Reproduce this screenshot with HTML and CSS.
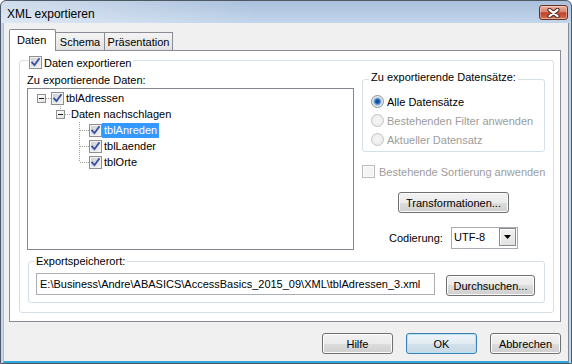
FILE: index.html
```html
<!DOCTYPE html>
<html lang="de">
<head>
<meta charset="utf-8">
<title>XML exportieren</title>
<link rel="stylesheet" href="styles.css">
</head>
<body>
<div class="window">
  <div class="titlebar">
    <span class="title">XML exportieren</span>
    <span class="close">
      <svg width="13" height="10" viewBox="0 0 13 10">
        <path d="M2.5 1.8 L10.5 8.2 M10.5 1.8 L2.5 8.2" stroke="#4b2922" stroke-width="4.2" stroke-linecap="round"/>
        <path d="M2.5 1.8 L10.5 8.2 M10.5 1.8 L2.5 8.2" stroke="#ffffff" stroke-width="2.2" stroke-linecap="round"/>
      </svg>
    </span>
  </div>
  <div class="client">
    <div class="tabs">
      <div class="tab tab-active">Daten</div>
      <div class="tab tab-idle tab-schema">Schema</div>
      <div class="tab tab-idle tab-pres">Präsentation</div>
    </div>
    <div class="panel">
      <div class="group g-main">
        <div class="legend lg-main">
          <span class="chk"><svg width="11" height="11" viewBox="0 0 11 11"><path d="M1.5 4.8 L4.5 8 L9.5 1.2" stroke="#3a4f9e" stroke-width="1.8" fill="none"/></svg></span>
          <span>Daten exportieren</span>
        </div>
        <div class="main-row">
          <div class="left-col">
            <div class="lbl-tree">Zu exportierende Daten:</div>
            <div class="tree">
              <div class="row">
                <span class="cell c-h"><span class="exp"><span class="minus"></span></span></span>
                <span class="chk"><svg width="11" height="11" viewBox="0 0 11 11"><path d="M1.5 4.8 L4.5 8 L9.5 1.2" stroke="#3a4f9e" stroke-width="1.8" fill="none"/></svg></span>
                <span class="txt">tblAdressen</span>
              </div>
              <div class="row">
                <span class="cell"></span>
                <span class="cell c-h c-top"><span class="exp"><span class="minus"></span></span></span>
                <span class="txt txt-plain">Daten nachschlagen</span>
              </div>
              <div class="row">
                <span class="cell"></span>
                <span class="cell"></span>
                <span class="cell c-h c-full"></span>
                <span class="chk"><svg width="11" height="11" viewBox="0 0 11 11"><path d="M1.5 4.8 L4.5 8 L9.5 1.2" stroke="#3a4f9e" stroke-width="1.8" fill="none"/></svg></span>
                <span class="txt txt-sel">tblAnreden</span>
              </div>
              <div class="row">
                <span class="cell"></span>
                <span class="cell"></span>
                <span class="cell c-h c-full"></span>
                <span class="chk"><svg width="11" height="11" viewBox="0 0 11 11"><path d="M1.5 4.8 L4.5 8 L9.5 1.2" stroke="#3a4f9e" stroke-width="1.8" fill="none"/></svg></span>
                <span class="txt">tblLaender</span>
              </div>
              <div class="row">
                <span class="cell"></span>
                <span class="cell"></span>
                <span class="cell c-h c-top"></span>
                <span class="chk"><svg width="11" height="11" viewBox="0 0 11 11"><path d="M1.5 4.8 L4.5 8 L9.5 1.2" stroke="#3a4f9e" stroke-width="1.8" fill="none"/></svg></span>
                <span class="txt">tblOrte</span>
              </div>
            </div>
          </div>
          <div class="right-col">
            <div class="group g-records">
              <div class="legend lg-records">Zu exportierende Datensätze:</div>
              <div class="opt opt-first"><span class="radio radio-on"></span><span>Alle Datensätze</span></div>
              <div class="opt disabled"><span class="radio radio-dis"></span><span>Bestehenden Filter anwenden</span></div>
              <div class="opt disabled"><span class="radio radio-dis"></span><span>Aktueller Datensatz</span></div>
            </div>
            <div class="opt-chk disabled"><span class="chk chk-dis"></span><span>Bestehende Sortierung anwenden</span></div>
            <div class="btn btn-trans">Transformationen...</div>
            <div class="enc-row">
              <span class="enc-lbl">Codierung:</span>
              <div class="select">
                <span class="sel-val">UTF-8</span>
                <span class="sel-arrow"><svg width="7" height="4" viewBox="0 0 7 4"><path d="M0 0 H7 L3.5 4 Z" fill="#000"/></svg></span>
              </div>
            </div>
          </div>
        </div>
        <div class="group g-export">
          <div class="legend lg-export">Exportspeicherort:</div>
          <div class="export-row">
            <div class="input">E:\Business\Andre\ABASICS\AccessBasics_2015_09\XML\tblAdressen_3.xml</div>
            <div class="btn btn-browse">Durchsuchen...</div>
          </div>
        </div>
      </div>
    </div>
    <div class="footer">
      <div class="btn btn-foot">Hilfe</div>
      <div class="btn btn-foot btn-default">OK</div>
      <div class="btn btn-foot">Abbrechen</div>
    </div>
  </div>
</div>
</body>
</html>
```
FILE: styles.css
```css
* { box-sizing: border-box; }
html, body { margin: 0; padding: 0; }
body {
  width: 572px;
  height: 364px;
  overflow: hidden;
  font-family: "Liberation Sans", Arial, sans-serif;
  font-size: 11px;
  line-height: 14px;
  color: #000;
  background: #ffffff;
}

.window {
  width: 572px;
  height: 364px;
  border: 1px solid #4e5966;
  border-radius: 6px 6px 0 0;
  padding: 0 2px;
  display: flex;
  flex-direction: column;
  background:
    linear-gradient(to right, rgba(255,255,255,0.45), rgba(255,255,255,0) 45%) 0 0 / 100% 22px no-repeat,
    linear-gradient(#aac0dc, #c2d5eb 22px, #c4d7ed);
}

.titlebar {
  height: 22px;
  flex: none;
  display: flex;
  align-items: flex-start;
  padding-left: 4px;
}
.title {
  font-size: 12px;
  line-height: 16px;
  margin-top: 5px;
}
.close {
  width: 29px;
  height: 15px;
  margin: 4px 1px 0 auto;
  border: 1px solid #6a2f26;
  border-radius: 3px;
  background: linear-gradient(#eab0a2, #d9846f 45%, #c2432b 52%, #cd5b3e 85%, #de8a6c);
  box-shadow: inset 0 0 0 1px rgba(255,255,255,0.35);
  display: flex;
  align-items: center;
  justify-content: center;
}

.client {
  flex: 1;
  background: #f0f0f0;
  border-left: 1px solid #8cc9ec;
  border-right: 1px solid #7d8a99;
  border-bottom: 2px solid #2ea6dd;
  display: flex;
  flex-direction: column;
}

/* Tabs */
.tabs {
  display: flex;
  align-items: flex-end;
  padding: 6px 0 0 5px;
  margin-bottom: -1px;
  position: relative;
  z-index: 1;
}
.tab {
  border: 1px solid #898c95;
  border-bottom: none;
  white-space: nowrap;
}
.tab-active {
  width: 47px;
  height: 22px;
  background: #ffffff;
  padding: 3px 0 0 7px;
  border-radius: 2px 2px 0 0;
}
.tab-idle {
  height: 18px;
  margin-bottom: 1px;
  background: linear-gradient(#f4f4f4, #e2e2e2);
  text-align: center;
  padding-top: 2px;
}
.tab-schema { width: 49px; border-left: none; }
.tab-pres { width: 68px; border-left: none; }

.panel {
  flex: none;
  width: 552px;
  height: 272px;
  margin-left: 5px;
  border: 1px solid #898c95;
  background: #ffffff;
  padding: 9px 0 0 9px;
}

/* Group boxes */
.group {
  border: 1px solid #d5dfe5;
  border-radius: 3px;
}
.legend {
  display: flex;
  align-items: center;
  width: max-content;
  background: #ffffff;
}
.g-main { width: 535px; height: 253px; }
.lg-main {
  height: 15px;
  margin: -6px 0 0 8px;
  padding: 0 2px 0 1px;
  gap: 2px;
}
.main-row { display: flex; }
.left-col { margin-left: 7px; }
.lbl-tree { margin-top: 3px; margin-bottom: 1px; }

/* Checkbox */
.chk {
  flex: none;
  width: 13px;
  height: 13px;
  border: 1px solid #8e8f8f;
  background: linear-gradient(135deg, #c9ccd1, #f5f5f5);
  box-shadow: inset 0 0 0 1px #f3f3f3;
  display: flex;
  align-items: center;
  justify-content: center;
}
.chk-dis {
  border-color: #bdbdbd;
  background: #f4f4f4;
  box-shadow: inset 0 0 0 1px #fbfbfb;
}

/* Tree */
.tree {
  width: 327px;
  height: 162px;
  border: 1px solid #828790;
  background: #ffffff;
  padding-top: 1px;
}
.row {
  display: flex;
  height: 16px;
  padding-left: 4px;
}
.row .chk { margin-top: 2px; }
.cell {
  flex: none;
  width: 19px;
  height: 16px;
  display: flex;
  justify-content: center;
  align-items: flex-start;
  background-repeat: no-repeat;
}
.c-h {
  background-image: repeating-linear-gradient(to right, #a0a0a0 0 1px, transparent 1px 2px);
  background-size: 9px 1px;
  background-position: 10px 8px;
}
.c-h.c-top {
  background-image:
    repeating-linear-gradient(to right, #a0a0a0 0 1px, transparent 1px 2px),
    repeating-linear-gradient(to bottom, #a0a0a0 0 1px, transparent 1px 2px);
  background-size: 9px 1px, 1px 8px;
  background-position: 10px 8px, 9px 0;
}
.c-h.c-full {
  background-image:
    repeating-linear-gradient(to right, #a0a0a0 0 1px, transparent 1px 2px),
    repeating-linear-gradient(to bottom, #a0a0a0 0 1px, transparent 1px 2px);
  background-size: 9px 1px, 1px 16px;
  background-position: 10px 8px, 9px 0;
}
.exp {
  width: 9px;
  height: 9px;
  margin-top: 4px;
  border: 1px solid #919191;
  background: linear-gradient(135deg, #ffffff, #e2e2e2);
  display: flex;
  align-items: center;
  justify-content: center;
}
.minus {
  width: 5px;
  height: 1px;
  background: #1a1a1a;
}
.txt {
  height: 15px;
  line-height: 15px;
  margin-top: 1px;
  padding: 0 2px;
  white-space: nowrap;
}
.txt-plain { padding-left: 1px; }
.txt-sel { background: #3399ff; color: #ffffff; }

/* Right column */
.right-col { margin-left: 8px; }
.g-records {
  width: 183px;
  margin-top: 9px;
  padding-bottom: 2px;
}
.lg-records {
  margin: -10px 0 0 6px;
  padding: 0 2px;
}
.opt {
  display: flex;
  align-items: center;
  height: 19px;
  padding-left: 8px;
  gap: 3px;
  white-space: nowrap;
}
.opt-first { margin-top: 8px; }
.disabled { color: #9c9c9c; }
.radio {
  flex: none;
  width: 13px;
  height: 13px;
  border-radius: 50%;
  border: 1px solid #8e8f8f;
}
.radio-on {
  background: radial-gradient(circle at 50% 50%, #0d3f82 0, #1c5ca6 1.8px, #5b98d6 3px, #a9d0f2 3.9px, #dcdcdc 4.5px, #f3f3f3 5.5px);
}
.radio-dis {
  border-color: #c3c3c3;
  background: radial-gradient(circle at 50% 50%, #f6f6f6, #e9e9e9);
}
.opt-chk {
  display: flex;
  align-items: center;
  height: 15px;
  margin-top: 12px;
  gap: 4px;
  white-space: nowrap;
}

/* Buttons */
.btn {
  height: 21px;
  border: 1px solid #707070;
  border-radius: 3px;
  background: linear-gradient(#f2f2f2 0%, #ebebeb 50%, #dddddd 50%, #cfcfcf 100%);
  box-shadow: inset 0 0 0 1px #fbfbfb;
  display: flex;
  align-items: center;
  justify-content: center;
  white-space: nowrap;
}
.btn-trans { width: 111px; margin: 13px 0 0 36px; }
.btn-browse { width: 89px; margin: 2px 0 0 11px; }
.btn-foot { width: 71px; }
.btn-default {
  border-color: #3c7fb1;
  background: linear-gradient(#eef5f9 0%, #e2ecf2 50%, #d2e1eb 50%, #c8d9e5 100%);
  box-shadow: inset 0 0 0 1px #b5e4f7;
}

.enc-row {
  display: flex;
  align-items: center;
  margin: 14px 0 0 27px;
}
.enc-lbl { width: 62px; }
.select {
  width: 67px;
  height: 22px;
  border: 1px solid #a7abb2;
  background: #ffffff;
  display: flex;
  align-items: flex-start;
  padding-left: 2px;
}
.sel-val { flex: 1; line-height: 19px; }
.sel-arrow {
  width: 17px;
  height: 18px;
  margin-right: 1px;
  border: 1px solid #8a8a8a;
  background: linear-gradient(#f2f2f2, #e2e2e2);
  box-shadow: inset 1px 1px 0 #ffffff;
  display: flex;
  align-items: center;
  justify-content: center;
}

/* Export group */
.g-export {
  width: 517px;
  margin: 11px 0 0 8px;
  padding-bottom: 6px;
}
.lg-export {
  margin: -8px 0 0 5px;
  padding: 0 2px;
}
.export-row {
  display: flex;
  align-items: flex-start;
  margin-top: 5px;
  padding-left: 7px;
}
.input {
  width: 399px;
  height: 22px;
  border: 1px solid #abadb3;
  background: #ffffff;
  padding-left: 3px;
  line-height: 20px;
  white-space: nowrap;
  overflow: hidden;
}

/* Footer */
.footer {
  display: flex;
  justify-content: flex-end;
  gap: 13px;
  margin-top: 11px;
  padding-right: 7px;
}
```
